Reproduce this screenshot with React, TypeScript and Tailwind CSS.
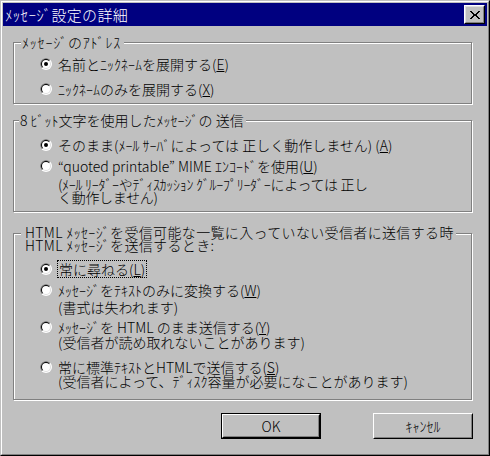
import React from "react";

function Radio({ checked }: { checked?: boolean }) {
  return (
    <svg width="12" height="12" viewBox="0 0 12 12" className="block shrink-0">
      <circle cx="6" cy="6" r="6" fill="#ffffff" />
      <path d="M1.757 10.243A6 6 0 0 1 10.243 1.757Z" fill="#808080" />
      <circle cx="6" cy="6" r="5" fill="#dfdfdf" />
      <path d="M2.464 9.536A5 5 0 0 1 9.536 2.464Z" fill="#000000" />
      <circle cx="6" cy="6" r="4" fill="#ffffff" />
      {checked && <circle cx="6" cy="6" r="2" fill="#000000" />}
    </svg>
  );
}

function CloseGlyph() {
  const rows = [
    [0, 8],
    [1, 7],
    [2, 6],
    [3, 3],
    [3, 3],
    [2, 6],
    [1, 7],
    [0, 8],
  ];
  return (
    <svg width="10" height="8" viewBox="0 0 10 8" className="block" shapeRendering="crispEdges">
      {rows.map(([a, b], i) =>
        a === b ? (
          <rect key={i} x={a} y={i} width={4} height={1} fill="#000" />
        ) : (
          <g key={i}>
            <rect x={a} y={i} width={2} height={1} fill="#000" />
            <rect x={b} y={i} width={2} height={1} fill="#000" />
          </g>
        )
      )}
    </svg>
  );
}

function Opt({
  checked,
  children,
  desc,
  className = "",
  descClass = "",
}: {
  checked?: boolean;
  children: React.ReactNode;
  desc?: React.ReactNode;
  className?: string;
  descClass?: string;
}) {
  return (
    <div className={`flex items-start ${className}`}>
      <div className="mt-[1px]">
        <Radio checked={checked} />
      </div>
      <div className="ml-[6px]">
        <div className="leading-[14px] whitespace-nowrap">{children}</div>
        {desc && <div className={`whitespace-nowrap ${descClass}`}>{desc}</div>}
      </div>
    </div>
  );
}

export default function App() {
  return (
    <div className="w-[490px] h-[456px] bg-[#c0c0c0] border border-t-[#c0c0c0] border-l-[#c0c0c0] border-r-black border-b-black text-black text-[14px] font-light font-['Noto_Sans_CJK_JP',sans-serif]">
      <div className="h-full border border-t-white border-l-white border-r-[#808080] border-b-[#808080] p-[1px] flex flex-col">
        {/* Title bar */}
        <div className="h-[23px] shrink-0 bg-[#000080] flex items-center pl-[2px] pr-[2px]">
          <span className="text-white text-[15px] leading-[23px] whitespace-nowrap tracking-[0.3px]">ﾒｯｾｰｼﾞ設定の詳細</span>
          <div className="ml-auto w-[21px] h-[19px] bg-[#c0c0c0] border border-t-white border-l-white border-r-black border-b-black">
            <div className="h-full w-full border border-t-[#dfdfdf] border-l-[#dfdfdf] border-r-[#808080] border-b-[#808080] flex items-center justify-center">
              <CloseGlyph />
            </div>
          </div>
        </div>

        {/* Group 1 */}
        <div className="relative ml-[10px] mr-[15px] mt-[16px] h-[62px] shrink-0 border border-[#808080] shadow-[inset_1px_1px_0_#fff,1px_1px_0_#fff] pl-[26px] pt-[14px]">
          <div className="absolute left-[7px] top-[-8px] bg-[#c0c0c0] pl-[1px] pr-[3px] leading-[14px] whitespace-nowrap tracking-[0.8px]">
            ﾒｯｾｰｼﾞのｱﾄﾞﾚｽ
          </div>
          <Opt checked>
            名前とﾆｯｸﾈｰﾑを展開する(<u>E</u>)
          </Opt>
          <Opt className="mt-[11px]">
            ﾆｯｸﾈｰﾑのみを展開する(<u>X</u>)
          </Opt>
        </div>

        {/* Group 2 */}
        <div className="relative ml-[10px] mr-[15px] mt-[16px] h-[92px] shrink-0 border border-[#808080] shadow-[inset_1px_1px_0_#fff,1px_1px_0_#fff] pl-[26px] pt-[17px]">
          <div className="absolute left-[5px] top-[-8px] bg-[#c0c0c0] pl-[1px] pr-[2px] leading-[14px] whitespace-nowrap">
            8 ﾋﾞｯﾄ文字を使用したﾒｯｾｰｼﾞの 送信
          </div>
          <Opt checked>
            そのまま(ﾒｰﾙ ｻｰﾊﾞによっては 正しく動作しません) (<u>A</u>)
          </Opt>
          <Opt
            className="mt-[7px]"
            descClass="mt-[5px] leading-[13px] tracking-[-0.3px]"
            desc={
              <>
                (ﾒｰﾙ ﾘｰﾀﾞｰやﾃﾞｨｽｶｯｼｮﾝ ｸﾞﾙｰﾌﾟﾘｰﾀﾞｰによっては 正し
                <br />
                く動作しません)
              </>
            }
          >
            “quoted printable” MIME ｴﾝｺｰﾄﾞを使用(<u>U</u>)
          </Opt>
        </div>

        {/* Group 3 */}
        <div className="relative ml-[10px] mr-[15px] mt-[21px] h-[167px] shrink-0 border border-[#808080] shadow-[inset_1px_1px_0_#fff,1px_1px_0_#fff] pl-[26px] pt-[28px]">
          <div className="absolute left-[7px] top-[-8px] bg-[#c0c0c0] pl-[4px] pr-[2px] leading-[13px] whitespace-nowrap tracking-[0.35px]">
            <div>HTML ﾒｯｾｰｼﾞを受信可能な一覧に入っていない受信者に送信する時</div>
            <div>HTML ﾒｯｾｰｼﾞを送信するとき:</div>
          </div>
          <Opt checked>
            <span className="-ml-[1px] -my-[2px] inline-block border border-dotted border-black px-[1px] py-[1px] leading-[14px]">
              常に尋ねる(<u>L</u>)
            </span>
          </Opt>
          <Opt className="mt-[7px]" descClass="mt-[3px] leading-[14px]" desc="(書式は失われます)">
            ﾒｯｾｰｼﾞをﾃｷｽﾄのみに変換する(<u>W</u>)
          </Opt>
          <Opt className="mt-[6px]" descClass="mt-[1px] leading-[14px]" desc="(受信者が読め取れないことがあります)">
            ﾒｯｾｰｼﾞを HTML のまま送信する(<u>Y</u>)
          </Opt>
          <Opt
            className="mt-[11px]"
            descClass="mt-[0px] leading-[14px]"
            desc="(受信者によって、ﾃﾞｨｽｸ容量が必要になことがあります)"
          >
            常に標準ﾃｷｽﾄとHTMLで送信する(<u>S</u>)
          </Opt>
        </div>

        {/* Buttons */}
        <div className="mt-[13px] mr-[14px] flex justify-end gap-[52px]">
          <div className="w-[100px] h-[26px] border border-black">
            <div className="h-full w-full border border-t-white border-l-white border-r-black border-b-black">
              <div className="h-full w-full border border-t-[#c0c0c0] border-l-[#c0c0c0] border-r-[#808080] border-b-[#808080] flex items-center justify-center leading-[14px]">
                OK
              </div>
            </div>
          </div>
          <div className="w-[100px] h-[26px] border border-t-white border-l-white border-r-black border-b-black">
            <div className="h-full w-full border border-t-[#c0c0c0] border-l-[#c0c0c0] border-r-[#808080] border-b-[#808080] flex items-center justify-center leading-[14px]">
              ｷｬﾝｾﾙ
            </div>
          </div>
        </div>
      </div>
    </div>
  );
}
